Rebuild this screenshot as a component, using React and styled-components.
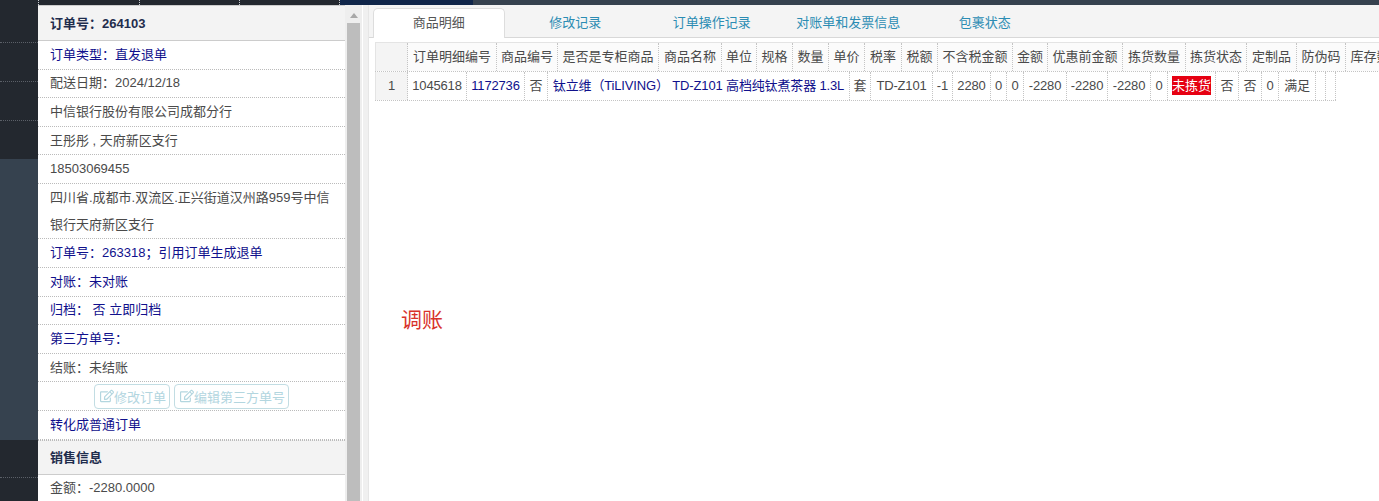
import { createGlobalStyle } from "styled-components";
import styled from "styled-components";
import { FaRegEdit } from "react-icons/fa";

const GlobalStyle = createGlobalStyle`
  html, body {
    margin: 0;
    padding: 0;
    height: 100%;
    overflow: hidden;
    background: #fff;
  }
  body {
    font-family: "Liberation Sans", "Noto Sans CJK SC", sans-serif;
    font-size: 13px;
    color: #4a4a4a;
  }
`;

const Page = styled.div`
  width: 1379px;
  height: 501px;
  display: flex;
  flex-direction: column;
  overflow: hidden;
`;

const TopBar = styled.div`
  flex: none;
  height: 5px;
  display: flex;
  background: #36424f;
`;

const TopItem = styled.div`
  flex: none;
  box-sizing: border-box;
  width: ${(p) => p.$w}px;
  background: ${(p) => (p.$navy ? "#10264a" : "#23282f")};
  border-right: ${(p) => (p.$navy ? "0" : "1px dotted #c9ccd0")};
`;

const Body = styled.div`
  flex: 1;
  min-height: 0;
  display: flex;
`;

const SideNav = styled.div`
  flex: none;
  width: 38px;
  background: #23282f;
  display: flex;
  flex-direction: column;
`;

const NavItem = styled.div`
  flex: none;
  box-sizing: border-box;
  height: ${(p) => p.$h}px;
  background: ${(p) => (p.$active ? "#36424f" : "#23282f")};
  border-bottom: ${(p) => (p.$line ? "1px dotted #5b6068" : "0")};
`;

const Panel = styled.div`
  flex: none;
  width: 307px;
  background: #fff;
  border-top: 1px solid #ccc;
  box-sizing: border-box;
  overflow: hidden;
`;

const SectionTitle = styled.div`
  box-sizing: border-box;
  height: ${(p) => p.$h}px;
  line-height: ${(p) => (p.$divided ? p.$h - 1 : p.$h)}px;
  padding-left: 12px;
  background: #f3f3f3;
  border-bottom: 1px solid #ccc;
  border-top: ${(p) => (p.$divided ? "1px dotted #bbb" : "0")};
  font-weight: bold;
  color: #1f2d4d;
`;

const InfoRow = styled.div`
  padding: 0.8px 12px 0;
  line-height: 26.8px;
  border-bottom: 1px dotted #bbb;
  color: ${(p) => (p.$link ? "#10108c" : "#4a4a4a")};
`;

const ActionRow = styled.div`
  display: flex;
  justify-content: center;
  gap: 4px;
  align-items: center;
  height: 27.6px;
  border-bottom: 1px dotted #bbb;
`;

const GhostButton = styled.button`
  box-sizing: border-box;
  height: 25px;
  padding: 0 3px 0 5px;
  display: flex;
  align-items: center;
  gap: 0;
  font: inherit;
  color: #b3d6df;
  background: #fff;
  border: 1px solid #c2dde3;
  border-radius: 4px;
`;

const ScrollTrack = styled.div`
  flex: none;
  width: 17px;
  background: #eeeeee;
  display: flex;
  flex-direction: column;
  align-items: center;
`;

const ScrollArrow = styled.div`
  flex: none;
  margin-top: 8px;
  width: 0;
  height: 0;
  border-left: 4px solid transparent;
  border-right: 4px solid transparent;
  border-bottom: 5px solid #a8a8a8;
`;

const ScrollThumb = styled.div`
  flex: 1;
  width: 13px;
  margin-top: 5px;
  background: #bdbdbd;
`;

const Splitter = styled.div`
  flex: none;
  width: 5px;
  background: #f0f0f0;
  border-left: 1px solid #fff;
`;

const Main = styled.div`
  flex: 1;
  min-width: 0;
  overflow: hidden;
  background: #fff;
  border-left: 1px solid #e6e6e6;
`;

const TabBar = styled.div`
  box-sizing: border-box;
  height: 33px;
  padding: 3px 0 0 4px;
  display: flex;
  gap: 5px;
  background: #f4f4f4;
  border-bottom: 1px solid #d8d8d8;
`;

const Tab = styled.div`
  flex: none;
  box-sizing: border-box;
  width: 131.5px;
  height: 30px;
  line-height: 27px;
  text-align: center;
  color: ${(p) => (p.$active ? "#555" : "#2b8cb3")};
  background: ${(p) => (p.$active ? "#fff" : "transparent")};
  border: ${(p) => (p.$active ? "1px solid #ddd" : "1px solid transparent")};
  border-bottom: 0;
  border-radius: 5px 5px 0 0;
`;

const Grid = styled.div`
  margin: 4px 0 0 6px;
  border-top: 1px solid #e4e4e4;
`;

const Row = styled.div`
  display: flex;
  height: ${(p) => p.$h}px;
  width: max-content;
  border-bottom: 1px dotted #c4c4c4;
`;

const Cell = styled.div`
  flex: none;
  box-sizing: border-box;
  width: ${(p) => p.$w}px;
  line-height: ${(p) => p.$h}px;
  text-align: center;
  white-space: nowrap;
  overflow: hidden;
  letter-spacing: ${(p) => (p.$head ? "0" : "-0.15px")};
  border-right: 1px dotted #c4c4c4;
  color: ${(p) => (p.$link ? "#10108c" : "#4a4a4a")};
  background: ${(p) => (p.$corner ? "#f4f4f4" : p.$head ? "#fbfbfb" : "#fff")};
  border-left: ${(p) => (p.$corner ? "1px solid #e4e4e4" : "0")};
`;

const Pick = styled.span`
  display: inline-block;
  line-height: 19px;
  letter-spacing: 0;
  color: #fff;
  background: #e60012;
`;

const Note = styled.div`
  margin: 204px 0 0 32px;
  font-size: 21px;
  line-height: 30px;
  color: #d8322a;
`;

const headCols = [
  ["", 33],
  ["订单明细编号", 89],
  ["商品编号", 61],
  ["是否是专柜商品", 101],
  ["商品名称", 63],
  ["单位", 35],
  ["规格", 36],
  ["数量", 36],
  ["单价", 36],
  ["税率", 37],
  ["税额", 36],
  ["不含税金额", 75],
  ["金额", 35],
  ["优惠前金额", 75],
  ["拣货数量", 63],
  ["拣货状态", 61],
  ["定制品", 50],
  ["防伪码", 49],
  ["库存数量", 62],
];

const bodyCols = [
  ["1", 33, false],
  ["1045618", 59, false],
  ["1172736", 58, true],
  ["否", 23, false],
  ["钛立维（TiLIVING） TD-Z101 高档纯钛煮茶器 1.3L", 302, true],
  ["套", 21, false],
  ["TD-Z101", 62, false],
  ["-1", 20, false],
  ["2280", 38, false],
  ["0", 16, false],
  ["0", 17, false],
  ["-2280", 43, false],
  ["-2280", 41, false],
  ["-2280", 43, false],
  ["0", 17, false],
  ["未拣货", 48, false],
  ["否", 23, false],
  ["否", 23, false],
  ["0", 17, false],
  ["满足", 37, false],
  ["", 10, false],
  ["", 10, false],
];

const tabs = ["商品明细", "修改记录", "订单操作记录", "对账单和发票信息", "包裹状态"];

function App() {
  return (
    <Page>
      <GlobalStyle />
      <TopBar>
        <TopItem $w={39} />
        <TopItem $w={101} />
        <TopItem $w={100} />
        <TopItem $w={100} />
        <TopItem $w={133} $navy />
      </TopBar>
      <Body>
        <SideNav>
          <NavItem $h={38} $line />
          <NavItem $h={39} $line />
          <NavItem $h={39} $line />
          <NavItem $h={38} />
          <NavItem $h={281} $active />
          <NavItem $h={38} $line />
        </SideNav>
        <Panel>
          <SectionTitle $h={35}>订单号：264103</SectionTitle>
          <InfoRow $link>订单类型：直发退单</InfoRow>
          <InfoRow>配送日期：2024/12/18</InfoRow>
          <InfoRow>中信银行股份有限公司成都分行</InfoRow>
          <InfoRow>王彤彤 , 天府新区支行</InfoRow>
          <InfoRow>18503069455</InfoRow>
          <InfoRow>四川省.成都市.双流区.正兴街道汉州路959号中信银行天府新区支行</InfoRow>
          <InfoRow $link>订单号：263318；引用订单生成退单</InfoRow>
          <InfoRow $link>对账：未对账</InfoRow>
          <InfoRow $link>归档： 否 立即归档</InfoRow>
          <InfoRow $link>第三方单号：</InfoRow>
          <InfoRow>结账：未结账</InfoRow>
          <ActionRow>
            <GhostButton>
              <FaRegEdit size={14} />
              修改订单
            </GhostButton>
            <GhostButton>
              <FaRegEdit size={14} />
              编辑第三方单号
            </GhostButton>
          </ActionRow>
          <InfoRow $link>转化成普通订单</InfoRow>
          <SectionTitle $h={35} $divided>销售信息</SectionTitle>
          <InfoRow>金额：-2280.0000</InfoRow>
        </Panel>
        <ScrollTrack>
          <ScrollArrow />
          <ScrollThumb />
        </ScrollTrack>
        <Splitter />
        <Main>
          <TabBar>
            {tabs.map((t, i) => (
              <Tab key={t} $active={i === 0}>{t}</Tab>
            ))}
          </TabBar>
          <Grid>
            <Row $h={28}>
              {headCols.map(([t, w], i) => (
                <Cell key={i} $w={w} $h={28} $head $corner={i === 0}>{t}</Cell>
              ))}
            </Row>
            <Row $h={28}>
              {bodyCols.map(([t, w, link], i) => (
                <Cell key={i} $w={w} $h={28} $link={link} $corner={i === 0}>
                  {t === "未拣货" ? <Pick>{t}</Pick> : t}
                </Cell>
              ))}
            </Row>
          </Grid>
          <Note>调账</Note>
        </Main>
      </Body>
    </Page>
  );
}

export default App;
